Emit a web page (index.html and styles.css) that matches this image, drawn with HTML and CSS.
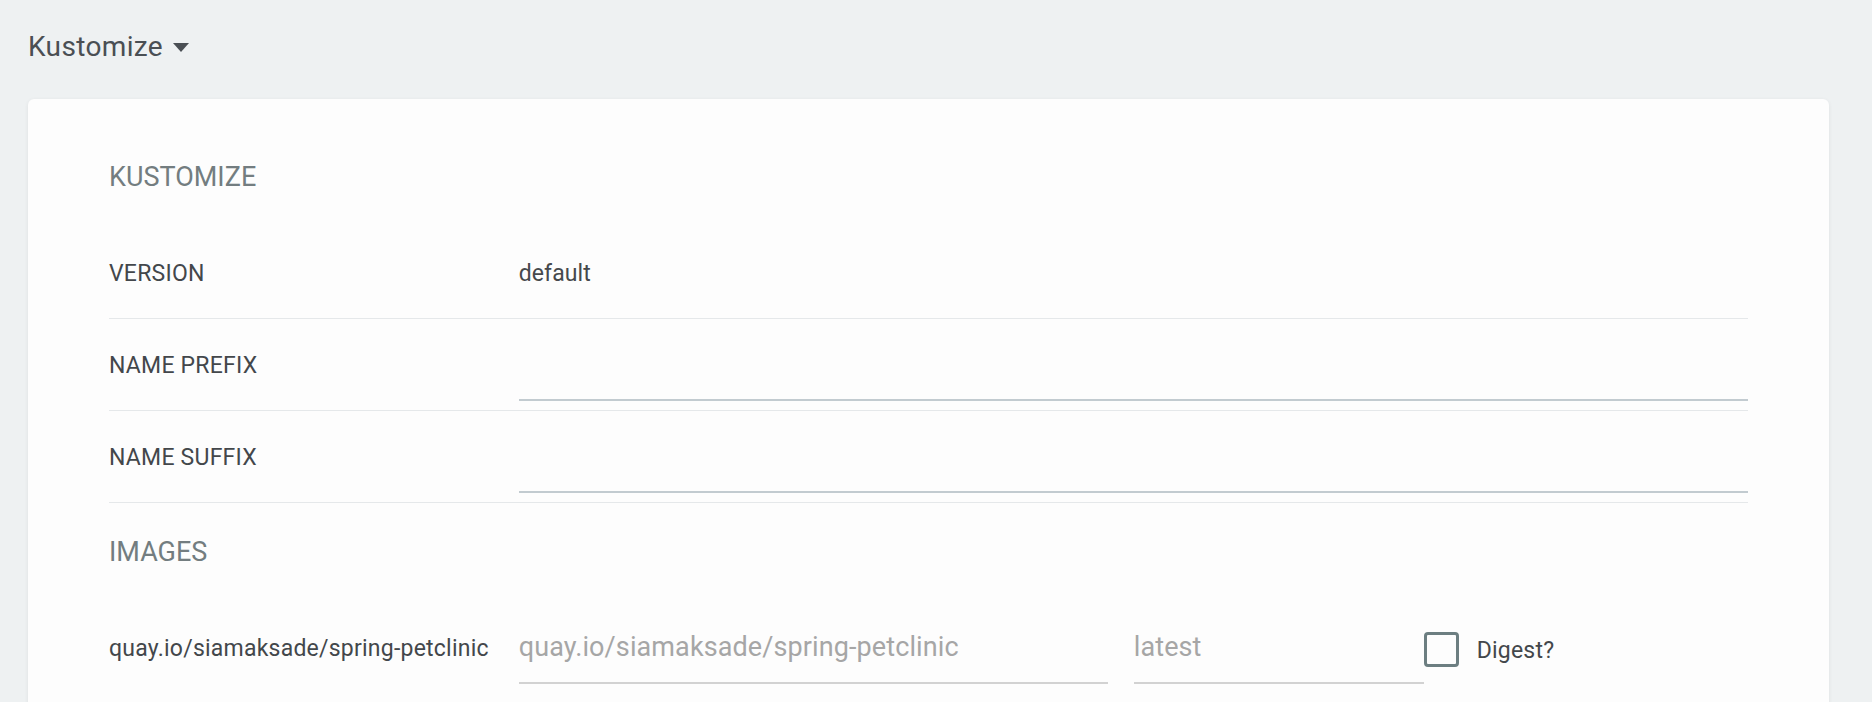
FILE: index.html
```html
<!DOCTYPE html>
<html lang="en">
<head>
<meta charset="utf-8">
<title>Kustomize parameters</title>
<link rel="stylesheet" href="styles.css">
</head>
<body>
<div class="page">
  <div class="section-title">
    <span>Kustomize</span>
    <svg class="caret" width="16" height="9" viewBox="0 0 16 9" aria-hidden="true"><path d="M0 0 H16 L8 9 Z"/></svg>
  </div>
  <div class="card">
    <h3 class="group-title">KUSTOMIZE</h3>
    <div class="row">
      <div class="label">VERSION</div>
      <div class="value value--center">default</div>
    </div>
    <div class="row">
      <div class="label">NAME PREFIX</div>
      <div class="value"><input class="field field--full field--blue" type="text"></div>
    </div>
    <div class="row">
      <div class="label">NAME SUFFIX</div>
      <div class="value"><input class="field field--full field--blue" type="text"></div>
    </div>
    <h3 class="group-title">IMAGES</h3>
    <div class="row row--last">
      <div class="label">quay.io/siamaksade/spring-petclinic</div>
      <div class="image-fields">
        <input class="field field--name" type="text" placeholder="quay.io/siamaksade/spring-petclinic">
        <input class="field field--tag" type="text" placeholder="latest">
        <label class="digest"><span class="checkbox"></span><span class="digest-text">Digest?</span></label>
      </div>
    </div>
  </div>
</div>
</body>
</html>
```

FILE: styles.css
```css
html, body {
  margin: 0;
  padding: 0;
}

body {
  background: #eef1f2;
  font-family: Roboto, "Liberation Sans", Arial, sans-serif;
  color: #43474b;
  overflow: hidden;
}

.page {
  padding: 30px 43px 0 28px;
}

.section-title {
  display: flex;
  align-items: center;
  gap: 10px;
  font-size: 28px;
  line-height: 34px;
  letter-spacing: 0.35px;
  color: #4a4f54;
  margin-bottom: 35px;
}

.caret {
  display: block;
  fill: #4a4f54;
  margin-top: 1px;
}

.card {
  background: #fdfdfd;
  border-radius: 6px;
  box-shadow: 0 1px 4px rgba(0, 0, 0, 0.07);
  padding: 29px 81px 40px 81px;
}

.group-title {
  margin: 34px 0;
  font-size: 27px;
  line-height: 31px;
  font-weight: 400;
  color: #737d80;
}

.row {
  display: grid;
  grid-template-columns: 25% 75%;
  height: 91px;
  border-bottom: 1px solid #e5e8ea;
}

.row--last {
  border-bottom: none;
}

.label {
  align-self: center;
  font-size: 23px;
  line-height: 27px;
  letter-spacing: 0.23px;
  color: #43474b;
  white-space: nowrap;
  margin-top: 1px;
}

.value {
  align-self: end;
  padding-bottom: 9px;
  font-size: 23px;
  line-height: 27px;
  color: #46494c;
}

.value--center {
  align-self: center;
  padding-bottom: 0;
  margin-top: 1px;
  letter-spacing: 0.1px;
}

.field {
  display: block;
  box-sizing: border-box;
  font-family: Roboto, "Liberation Sans", Arial, sans-serif;
  font-size: 27px;
  line-height: 32px;
  letter-spacing: 0.1px;
  padding: 0 0 19px 0;
  margin: 0;
  border: none;
  border-bottom: 2px solid #d2d2d2;
  background: transparent;
  color: #444;
  outline: none;
}

.field::placeholder {
  color: #a6a6a6;
}

.field--full {
  width: 100%;
}

.field--blue {
  border-bottom-color: #c2cbd0;
}

.image-fields {
  display: flex;
  align-items: flex-end;
}

.image-fields .field {
  margin-bottom: 9px;
}

.field--name {
  width: 589px;
  margin-right: 26px;
}

.field--tag {
  width: 290px;
}

.digest {
  display: flex;
  align-items: center;
  gap: 18px;
  align-self: center;
  margin-top: 3px;
  font-size: 23px;
  line-height: 27px;
  letter-spacing: 0.2px;
  color: #43474b;
}

.checkbox {
  display: block;
  box-sizing: border-box;
  width: 35px;
  height: 35px;
  border: 3px solid #6c7e81;
  border-radius: 4px;
  background: #fdfdfd;
}

.digest-text {
  margin-top: 2px;
}
```
